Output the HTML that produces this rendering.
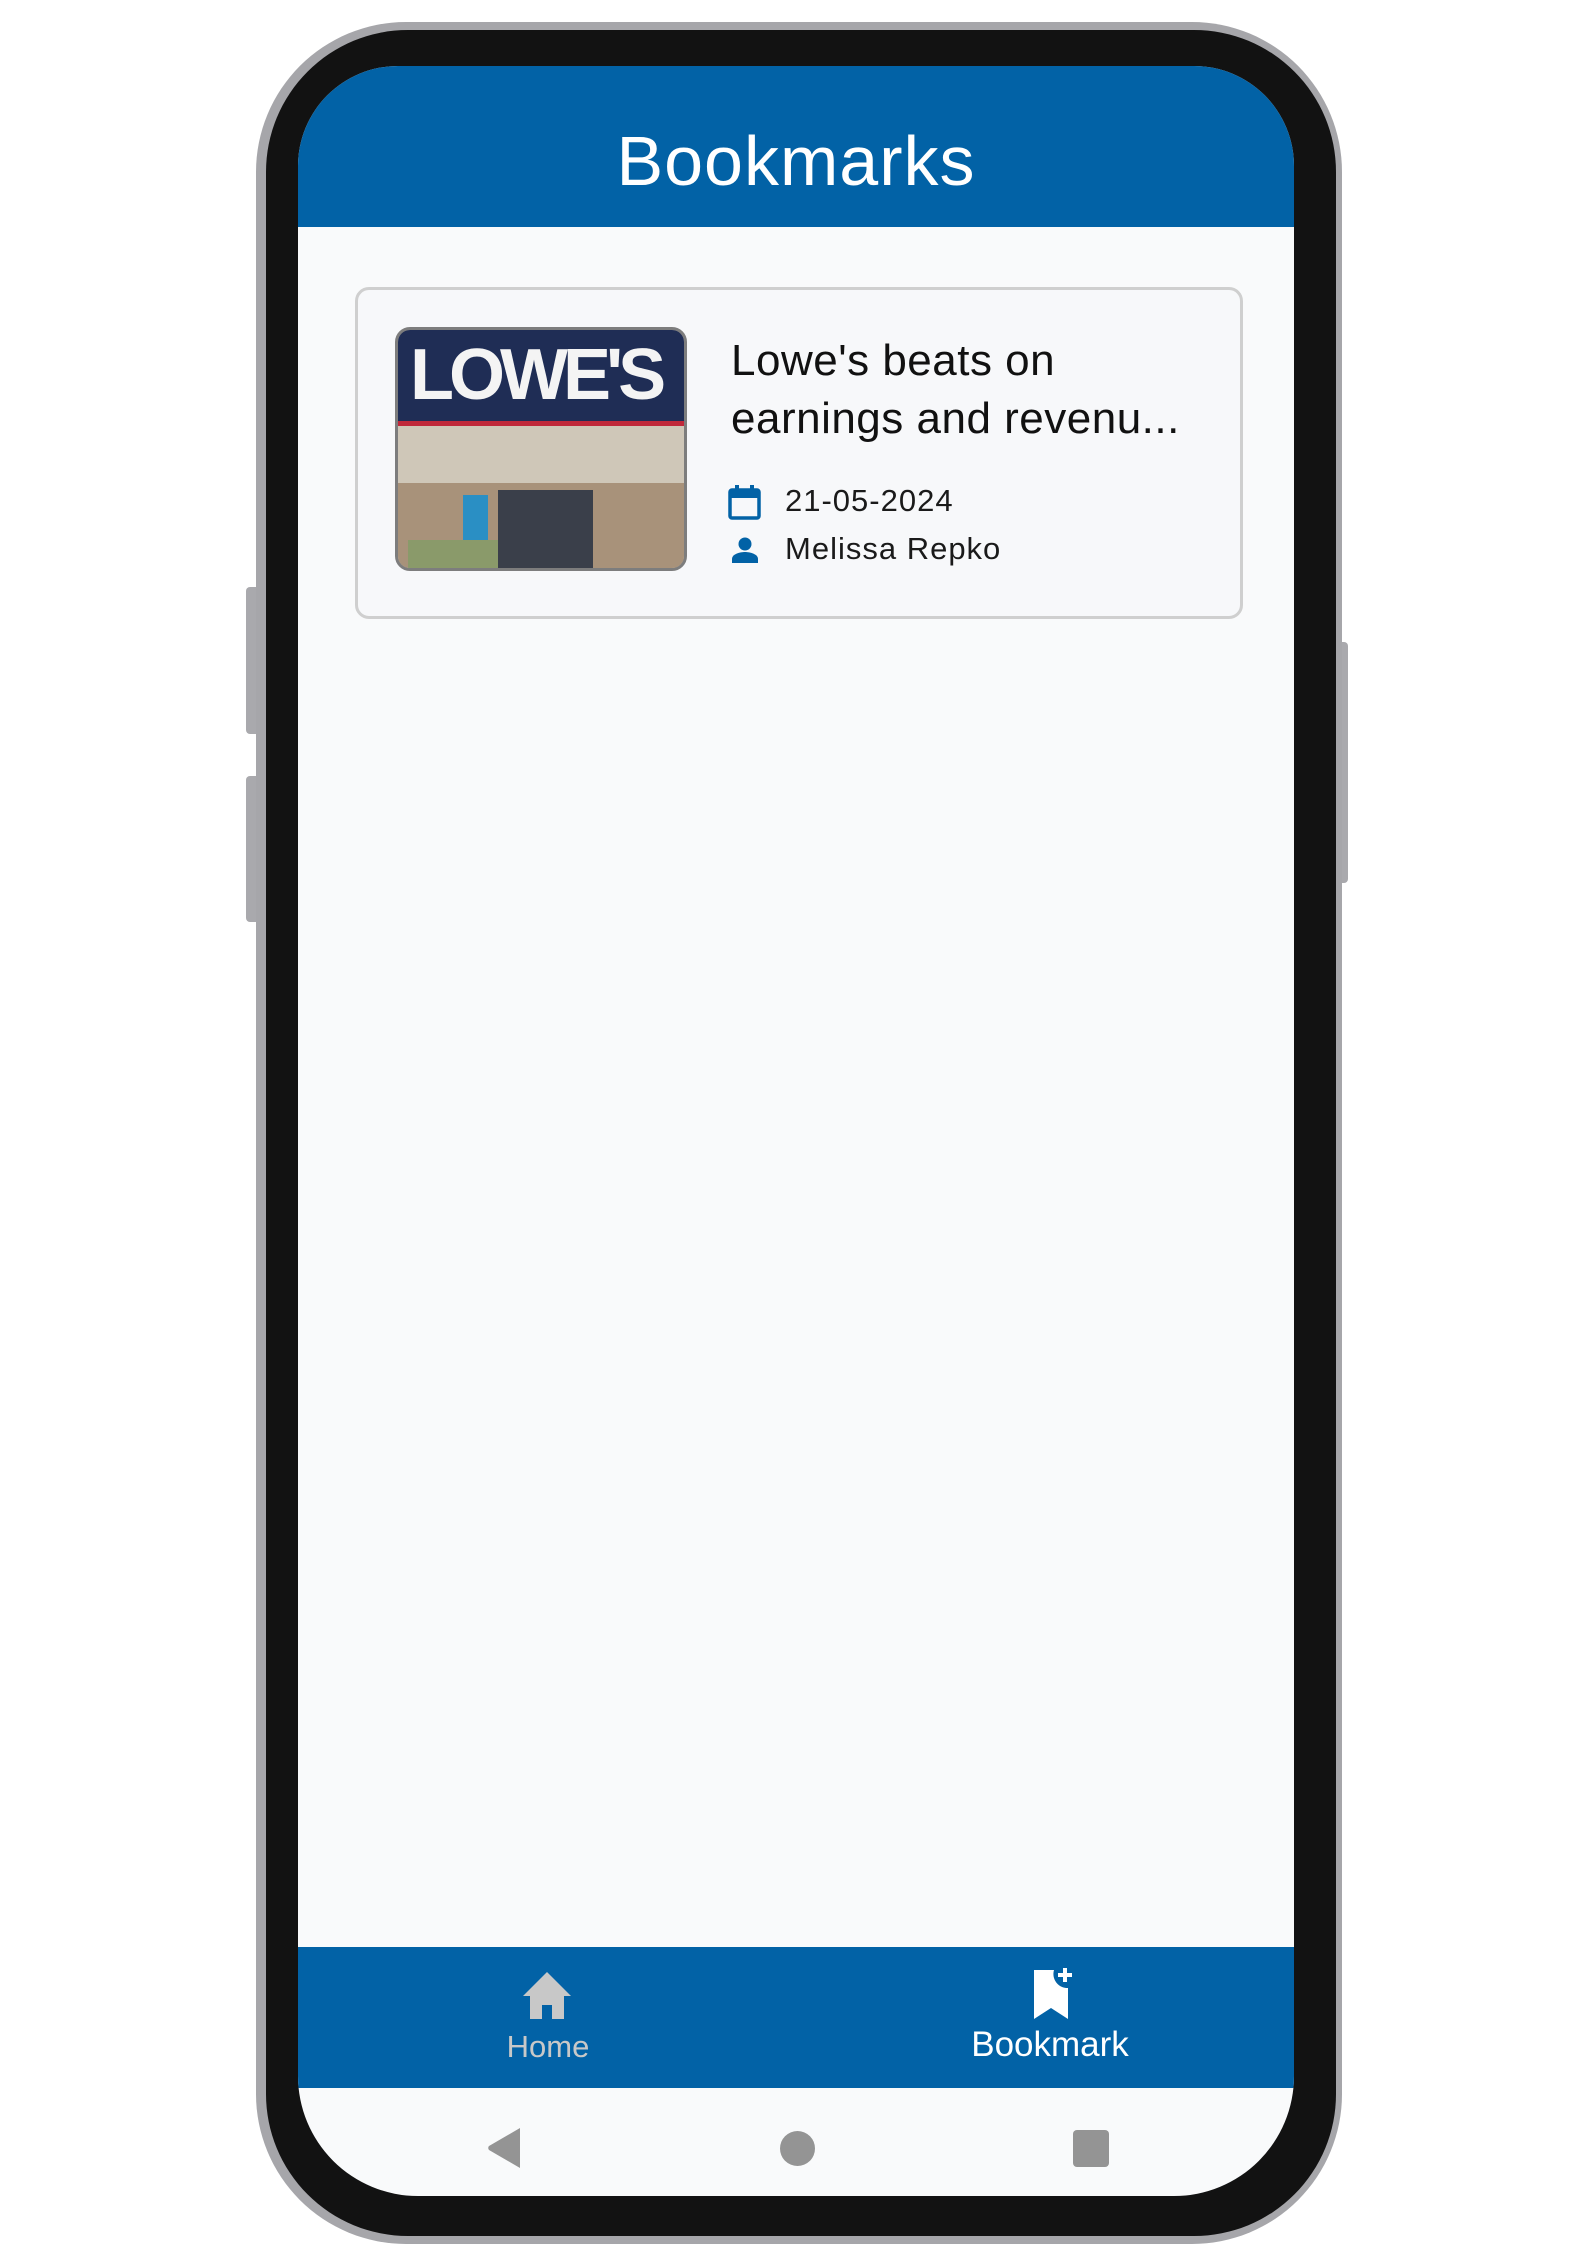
<!DOCTYPE html>
<html><head><meta charset="utf-8"><style>
*{margin:0;padding:0;box-sizing:border-box}
body{width:1587px;height:2245px;background:#fff;position:relative;overflow:hidden;font-family:"Liberation Sans",sans-serif}
.abs{position:absolute}
.phone{left:256px;top:22px;width:1086px;height:2222px;border-radius:150px;background:#a6a6aa}
.frame{left:266px;top:30px;width:1070px;height:2206px;border-radius:142px;background:#121212}
.screen{left:298px;top:66px;width:996px;height:2130px;border-radius:100px 100px 120px 120px;background:#f9fafb;overflow:hidden}
.header{left:0;top:0;width:996px;height:161px;background:#0262a6;color:#fff;text-align:center;font-size:70px;line-height:190px;letter-spacing:1px}
.card{left:57px;top:221px;width:888px;height:332px;border:3px solid #cfcfcf;border-radius:14px;background:#f7f8fa}
.img{left:97px;top:261px;width:292px;height:244px;border:3px solid #7d7d7d;border-radius:15px;overflow:hidden;background:#c6bfb3}
.t{color:#111;font-size:44px;left:433px;line-height:58px;height:58px;letter-spacing:0.5px;white-space:nowrap}
.m{color:#1a1a1a;font-size:31px;left:487px;letter-spacing:1px;line-height:36px;height:36px;white-space:nowrap}
.nav{left:0;top:1881px;width:996px;height:141px;background:#0262a6}
.btn{background:#a9a9ad;border-radius:4px}
</style></head><body>
<div class="abs btn" style="left:246px;top:587px;width:14px;height:147px"></div>
<div class="abs btn" style="left:246px;top:776px;width:14px;height:146px"></div>
<div class="abs btn" style="left:1336px;top:642px;width:12px;height:241px"></div>
<div class="abs phone"></div>
<div class="abs frame"></div>
<div class="abs screen">
  <div class="abs header">Bookmarks</div>
  <div class="abs card"></div>
  <div class="abs img">
    <div class="abs" style="left:0;top:0;width:292px;height:95px;background:#1f2d55"></div>
    <div class="abs" style="left:0;top:91px;width:292px;height:5px;background:#c0283a"></div>
    <div class="abs" style="left:0;top:96px;width:292px;height:57px;background:#cfc7b8"></div>
    <div class="abs" style="left:0;top:153px;width:292px;height:91px;background:#a8927a"></div>
    <div class="abs" style="left:100px;top:160px;width:95px;height:84px;background:#3a3f4a"></div>
    <div class="abs" style="left:65px;top:165px;width:25px;height:45px;background:#2a8fc4"></div>
    <div class="abs" style="left:10px;top:210px;width:90px;height:34px;background:#8a9a6a"></div>
    <div class="abs" style="left:12px;top:5px;font-size:72px;font-weight:bold;color:#f4f4f4;letter-spacing:-5px;line-height:80px;white-space:nowrap">LOWE'S</div>
  </div>
  <div class="abs t" style="top:266px">Lowe's beats on</div>
  <div class="abs t" style="top:324px">earnings and revenu...</div>
  <svg class="abs" style="left:430px;top:419px" width="33" height="35" viewBox="0 0 33 35"><rect x="2" y="5" width="29" height="28" rx="2" fill="none" stroke="#0262a6" stroke-width="3.5"/><rect x="2" y="5" width="29" height="8" fill="#0262a6"/><rect x="7" y="0" width="4" height="7" fill="#0262a6"/><rect x="22" y="0" width="4" height="7" fill="#0262a6"/></svg>
  <div class="abs m" style="top:417px">21-05-2024</div>
  <svg class="abs" style="left:434px;top:471px" width="26" height="26" viewBox="0 0 26 26"><circle cx="13" cy="7" r="6.5" fill="#0262a6"/><path d="M0 26v-4c0-5 8-7 13-7s13 2 13 7v4z" fill="#0262a6"/></svg>
  <div class="abs m" style="top:465px">Melissa Repko</div>
  <div class="abs nav">
    <svg class="abs" style="left:224px;top:25px" width="50" height="47" viewBox="0 0 50 47"><path d="M25 0L1 24h7v23h12V33h10v14h12V24h7z" fill="#c8c8c8"/></svg>
    <div class="abs" style="left:150px;top:82px;width:200px;text-align:center;color:#c8c8c8;font-size:31px">Home</div>
    <svg class="abs" style="left:734px;top:20px" width="44" height="52" viewBox="0 0 44 52"><path d="M2 3h20a14 14 0 0 0 14 18v31l-17-11-17 11z" fill="#fff"/><path d="M33 1v14M26 8h14" stroke="#fff" stroke-width="4"/></svg>
    <div class="abs" style="left:652px;top:78px;width:200px;text-align:center;color:#fff;font-size:35px">Bookmark</div>
  </div>
  <svg class="abs" style="left:188px;top:2062px" width="34" height="40" viewBox="0 0 34 40"><path d="M34 0v40L3 22a3 3 0 0 1 0-4z" fill="#949494"/></svg>
  <div class="abs" style="left:482px;top:2065px;width:35px;height:35px;border-radius:50%;background:#949494"></div>
  <div class="abs" style="left:775px;top:2064px;width:36px;height:37px;border-radius:4px;background:#949494"></div>
</div>
</body></html>
